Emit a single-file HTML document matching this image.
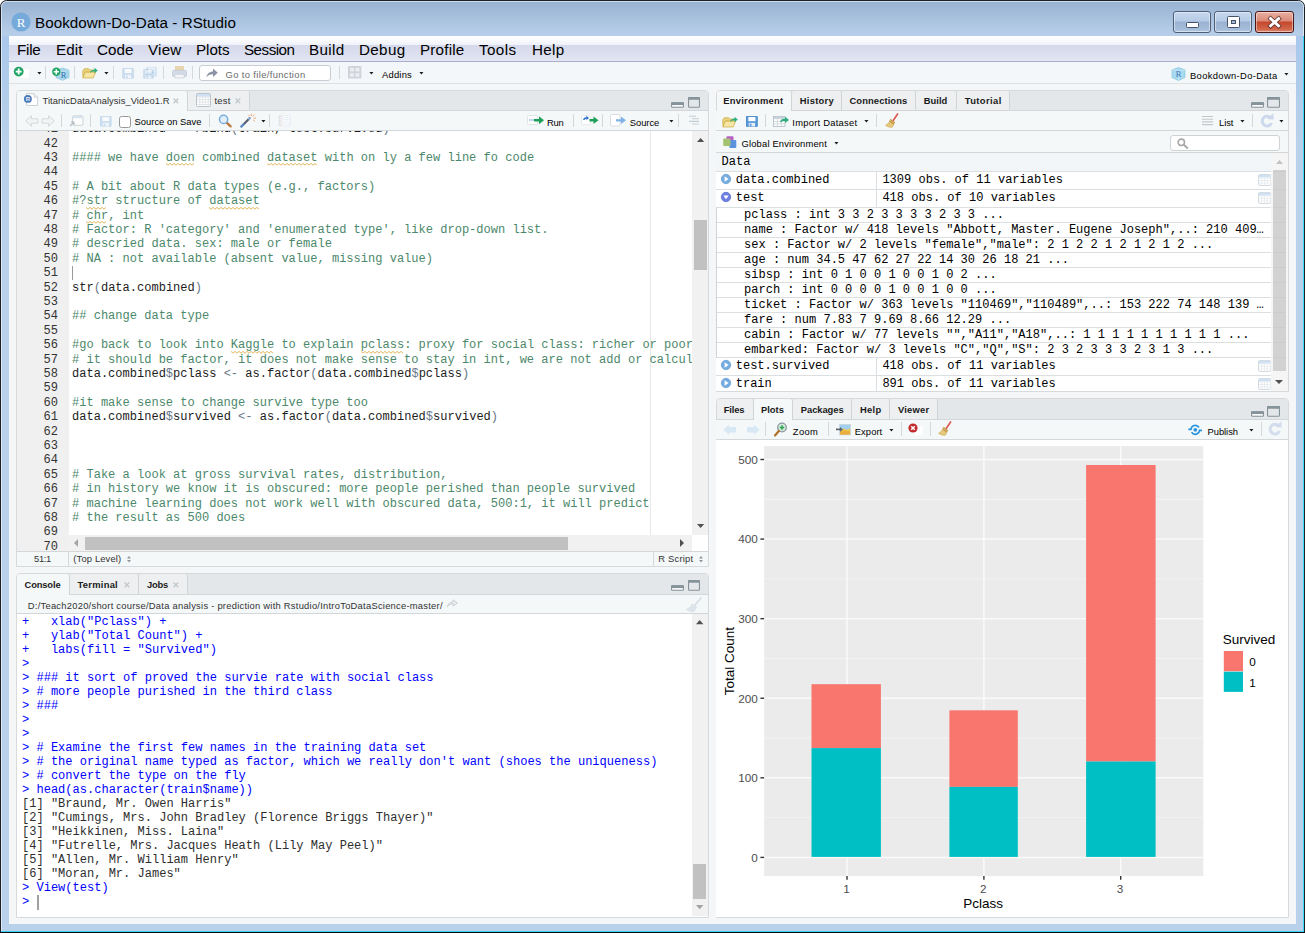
<!DOCTYPE html>
<html><head><meta charset="utf-8"><title>Bookdown-Do-Data - RStudio</title>
<style>
html,body{margin:0;padding:0;}
body{width:1305px;height:933px;overflow:hidden;position:relative;background:#fff;font-family:"Liberation Sans",sans-serif;font-size:10.5px;color:#000;}
.t{position:absolute;white-space:pre;line-height:20px;height:20px;}
.a{position:absolute;}
.m{font-family:"Liberation Mono",monospace;}
svg{position:absolute;overflow:visible;}
.pane{position:absolute;box-sizing:border-box;border:1px solid #d6dadc;background:#fff;border-radius:4px 4px 0 0;overflow:hidden;}
.tabbar{position:absolute;left:0;top:0;right:0;height:20px;background:#e4e7e9;border-bottom:1px solid #d6dadc;}
.tab{position:absolute;top:0;height:20px;box-sizing:border-box;border-right:1px solid #d0d4d6;background:#eef0f1;border-radius:3px 3px 0 0;}
.tab.on{background:#f5f8f9;height:21px;}
.tb{position:absolute;left:0;right:0;background:#f5f8f9;border-bottom:1px solid #d6dadc;}
.sep{position:absolute;width:1px;background:#d4d8da;}
.cl{position:absolute;left:72px;white-space:pre;font-family:"Liberation Mono",monospace;font-size:12.04px;line-height:15px;height:15px;color:#1c1c1c;}
.ln{position:absolute;left:17px;width:41px;text-align:right;white-space:pre;font-family:"Liberation Mono",monospace;font-size:12.04px;line-height:15px;height:15px;color:#333;}
.c{color:#4c886b;}
.o{color:#687687;}
.sp{}
.co{position:absolute;left:22px;white-space:pre;font-family:"Liberation Mono",monospace;font-size:12.04px;line-height:14px;height:14px;color:#0000ff;}
.co.k{color:#2e2e2e;}

</style></head>
<body>
<div class="a" style="left:0;top:0;width:1305px;height:933px;box-sizing:border-box;border:1px solid #1b2026;border-radius:6.5px 6.5px 0 0;background:linear-gradient(#97b1d1 0px,#a3bcda 12px,#b4cce7 30px,#b9d1ea 40px,#b9d1ea 100%);"></div>
<div class="a" style="left:1px;top:1px;width:1303px;height:931px;box-sizing:border-box;border:1px solid rgba(255,255,255,0.55);border-radius:5.5px 5.5px 0 0;"></div>
<div style="position:absolute;left:2px;top:36px;width:7px;height:888px;background:linear-gradient(#a9c8ec,#b9d1ea 12%,#b9d1ea);"></div>
<div style="position:absolute;left:1296px;top:36px;width:7px;height:888px;background:linear-gradient(#a9c8ec,#b9d1ea 12%,#b9d1ea);"></div>
<div style="position:absolute;left:1px;top:931px;width:1303px;height:1px;background:#34d4f5;"></div>
<div style="position:absolute;left:1303px;top:36px;width:1px;height:896px;background:#3ad9f8;"></div>
<div style="position:absolute;left:0px;top:932px;width:1305px;height:1px;background:#0c0c0c;"></div>
<svg style="left:11px;top:12px" width="20" height="20" viewBox="0 0 20 20"><circle cx="10" cy="10" r="9.6" fill="#75aadb"/><text x="10" y="14.6" text-anchor="middle" font-family="Liberation Serif" font-size="13" fill="#fff">R</text></svg>
<div class="t" style="left:35px;top:12.93px;font-size:15.2px;color:#000;letter-spacing:0.035px;">Bookdown-Do-Data - RStudio</div>
<div class="a" style="left:1173px;top:11px;width:38px;height:22px;box-sizing:border-box;border:1px solid #4f5f77;border-radius:3px;background:linear-gradient(#c6d8ee 0%,#b6cbe5 45%,#9bb3d2 50%,#a4bcd9 85%,#b4cae4 100%);box-shadow:inset 0 0 0 1px rgba(255,255,255,0.45);"></div>
<div class="a" style="left:1214px;top:11px;width:38px;height:22px;box-sizing:border-box;border:1px solid #4f5f77;border-radius:3px;background:linear-gradient(#c6d8ee 0%,#b6cbe5 45%,#9bb3d2 50%,#a4bcd9 85%,#b4cae4 100%);box-shadow:inset 0 0 0 1px rgba(255,255,255,0.45);"></div>
<div class="a" style="left:1255px;top:11px;width:39px;height:22px;box-sizing:border-box;border:1px solid #4b1715;border-radius:3px;background:linear-gradient(#e8b0a3 0%,#dc8a78 45%,#c4472b 50%,#d0654a 85%,#e08a70 100%);box-shadow:inset 0 0 0 1px rgba(255,255,255,0.45);"></div>
<svg style="left:1186px;top:21.7px" width="13" height="7" viewBox="0 0 13 7"><rect x="0.5" y="0.5" width="12" height="5" rx="1" fill="#fff" stroke="#45536a"/></svg>
<svg style="left:1227px;top:16px" width="13" height="12" viewBox="0 0 13 12"><rect x="0.5" y="0.5" width="12" height="11" rx="1" fill="#fff" stroke="#45536a"/><rect x="4.5" y="4.5" width="4" height="3" fill="#a3b9d6" stroke="#45536a"/></svg>
<svg style="left:1268px;top:16px" width="13" height="12" viewBox="0 0 13 12"><path d="M2.6 2.6L10.6 9.8M10.6 2.6L2.6 9.8" stroke="#5a2a26" stroke-width="4.4" stroke-linecap="square"/><path d="M2.6 2.6L10.6 9.8M10.6 2.6L2.6 9.8" stroke="#fff" stroke-width="2.9" stroke-linecap="square"/></svg>
<div style="position:absolute;left:9px;top:36px;width:1287px;height:888px;background:#f5f6f8;"></div>
<div style="position:absolute;left:9px;top:36px;width:1287px;height:25px;background:linear-gradient(#ffffff 0px,#fbfcfe 3px,#eff2f9 8.6px,#d5d9eb 9.4px,#dadeee 17px,#e2e5f3 25px);"></div>
<div style="position:absolute;left:9px;top:61px;width:1287px;height:1px;background:#a9b0c9;"></div>
<div class="t" style="left:17px;top:40.23px;font-size:15.2px;color:#000;letter-spacing:-0.246px;">File</div>
<div class="t" style="left:56px;top:40.23px;font-size:15.2px;color:#000;letter-spacing:0.082px;">Edit</div>
<div class="t" style="left:97px;top:40.23px;font-size:15.2px;color:#000;letter-spacing:0.047px;">Code</div>
<div class="t" style="left:148px;top:40.23px;font-size:15.2px;color:#000;letter-spacing:0.211px;">View</div>
<div class="t" style="left:196px;top:40.23px;font-size:15.2px;color:#000;letter-spacing:-0.053px;">Plots</div>
<div class="t" style="left:244px;top:40.23px;font-size:15.2px;color:#000;letter-spacing:-0.507px;">Session</div>
<div class="t" style="left:309px;top:40.23px;font-size:15.2px;color:#000;letter-spacing:0.344px;">Build</div>
<div class="t" style="left:359px;top:40.23px;font-size:15.2px;color:#000;letter-spacing:0.347px;">Debug</div>
<div class="t" style="left:420px;top:40.23px;font-size:15.2px;color:#000;letter-spacing:0.205px;">Profile</div>
<div class="t" style="left:479px;top:40.23px;font-size:15.2px;color:#000;letter-spacing:0.406px;">Tools</div>
<div class="t" style="left:532px;top:40.23px;font-size:15.2px;color:#000;letter-spacing:0.312px;">Help</div>
<div style="position:absolute;left:9px;top:62px;width:1287px;height:21px;background:#f4f7f9;"></div>
<div style="position:absolute;left:9px;top:83px;width:1287px;height:1px;background:#dde1e4;"></div>
<svg style="left:13px;top:65px" width="18" height="15" viewBox="0 0 18 15"><rect x="6.6" y="3.6" width="10" height="10" fill="#fff" stroke="#eceff1" stroke-width="0.5"/><circle cx="5.7" cy="6.6" r="4.9" fill="#1fa463"/><path d="M5.7 3.6V9.6M2.7 6.6H8.7" stroke="#fff" stroke-width="1.8"/></svg>
<svg style="left:36.6px;top:72.2px" width="5" height="3" viewBox="0 0 5 3"><path d="M0.35 0H4.45L2.4 2.55Z" fill="#1d1d1d"/></svg>
<div class="sep" style="left:45px;top:66px;height:13px"></div>
<svg style="left:52px;top:66px" width="18" height="15" viewBox="0 0 18 15"><path d="M4 4.2L10.5 2L17 4.2V11.6L10.5 14.3L4 11.6Z" fill="#a9d6ea" stroke="#86c4df" stroke-width="0.7"/><path d="M10.5 5.8V14.3M4 4.2L10.5 5.8L17 4.2" stroke="#c9e6f2" stroke-width="0.6" fill="none"/><text x="11.6" y="12.2" text-anchor="middle" font-family="Liberation Serif" font-size="8.5" fill="#2f6db5">R</text><circle cx="4.3" cy="5.8" r="4.2" fill="#1fa463"/><path d="M4.3 3.2V8.4M1.7 5.8H6.9" stroke="#fff" stroke-width="1.6"/></svg>
<div class="sep" style="left:74px;top:66px;height:13px"></div>
<svg style="left:81.2px;top:67.2px" width="17.6" height="11.8" viewBox="0 0 19 14"><path d="M1 5L3 2H8L9.5 3.5H14V6H4L1.5 12.5Z" fill="#e9d27c" stroke="#cfae45" stroke-width="0.9"/><path d="M4 6.2H16.5L13.5 13H1.3Z" fill="#f5e6a6" stroke="#cfae45" stroke-width="0.9"/><path d="M9.5 7.5C10 4.5 12 3 15 3.2V1L19 4.2L15 7.4V5.2C12.8 5 11 5.8 9.5 7.5Z" fill="#2cae7c"/></svg>
<svg style="left:103.6px;top:72.2px" width="5" height="3" viewBox="0 0 5 3"><path d="M0.35 0H4.45L2.4 2.55Z" fill="#1d1d1d"/></svg>
<div class="sep" style="left:113px;top:66px;height:13px"></div>
<svg style="left:121.6px;top:68px" width="12.2" height="10.6" viewBox="0 0 12 11"><g opacity="0.27"><path d="M0.5 0.5H11.5V10.5H0.5Z" fill="#5b9bd8" stroke="#4f8fd0"/><rect x="2.4" y="1" width="7.2" height="4.2" fill="#fff"/><rect x="2.8" y="7" width="6.4" height="3.6" fill="#e6eff8"/><rect x="3.8" y="7.8" width="1.8" height="2.8" fill="#5b9bd8"/></g></svg>
<svg style="left:146px;top:66.6px" width="11" height="9.6" viewBox="0 0 12 11"><g opacity="0.2"><path d="M0.5 0.5H11.5V10.5H0.5Z" fill="#5b9bd8" stroke="#4f8fd0"/><rect x="2.4" y="1" width="7.2" height="4.2" fill="#fff"/><rect x="2.8" y="7" width="6.4" height="3.6" fill="#e6eff8"/><rect x="3.8" y="7.8" width="1.8" height="2.8" fill="#5b9bd8"/></g></svg>
<svg style="left:143px;top:69px" width="11" height="9.6" viewBox="0 0 12 11"><g opacity="0.27"><path d="M0.5 0.5H11.5V10.5H0.5Z" fill="#5b9bd8" stroke="#4f8fd0"/><rect x="2.4" y="1" width="7.2" height="4.2" fill="#fff"/><rect x="2.8" y="7" width="6.4" height="3.6" fill="#e6eff8"/><rect x="3.8" y="7.8" width="1.8" height="2.8" fill="#5b9bd8"/></g></svg>
<div class="sep" style="left:163px;top:66px;height:13px"></div>
<svg style="left:171.5px;top:66px" width="15" height="13" viewBox="0 0 15 13"><rect x="3.4" y="0.4" width="8.2" height="5" fill="#ead6ae" stroke="#dcc79c" stroke-width="0.5"/><rect x="0.5" y="4.3" width="14" height="6.4" rx="1.6" fill="#d3dbe6" stroke="#bcc6d3" stroke-width="0.7"/><rect x="2.8" y="8.3" width="9.4" height="3.6" rx="0.5" fill="#f3f5f8" stroke="#bcc6d3" stroke-width="0.6"/></svg>
<div class="sep" style="left:192px;top:66px;height:13px"></div>
<div class="a" style="left:199px;top:65px;width:132px;height:16px;box-sizing:border-box;border:1px solid #c9cdd1;border-radius:3px;background:#fff;"></div>
<svg style="left:206px;top:68px" width="12" height="10" viewBox="0 0 12 10"><path d="M0.5 9.5C1 5.5 3.5 3.6 7 3.5V0.5L11.8 4.8L7 9V6.2C4.2 6 2.2 7 0.5 9.5Z" fill="#8d93a6"/></svg>
<div class="t" style="left:225.5px;top:65.24px;font-size:9.4px;color:#6a6a6a;letter-spacing:0.370px;">Go to file/function</div>
<div class="sep" style="left:339px;top:66px;height:13px"></div>
<svg style="left:348px;top:66.2px" width="13.4" height="12.6" viewBox="0 0 13.4 12.6"><rect x="0" y="0" width="13.4" height="12.6" rx="1.2" fill="#cfd4da"/><g fill="#eceef2"><rect x="2" y="1.9" width="3.9" height="3.5"/><rect x="7.5" y="1.9" width="3.9" height="3.5"/><rect x="2" y="7.2" width="3.9" height="3.5"/><rect x="7.5" y="7.2" width="3.9" height="3.5"/></g></svg>
<svg style="left:368.6px;top:72.2px" width="5" height="3" viewBox="0 0 5 3"><path d="M0.35 0H4.45L2.4 2.55Z" fill="#1d1d1d"/></svg>
<div class="t" style="left:382px;top:65.24px;font-size:9.4px;color:#000;letter-spacing:0.221px;">Addins</div>
<svg style="left:418.6px;top:72.2px" width="5" height="3" viewBox="0 0 5 3"><path d="M0.35 0H4.45L2.4 2.55Z" fill="#1d1d1d"/></svg>
<svg style="left:1171px;top:66px" width="15" height="15" viewBox="0 0 15 15"><path d="M1 4L7.5 1.5L14 4V11.5L7.5 14.5L1 11.5Z" fill="#a9daef" stroke="#7fc5e3" stroke-width="0.7"/><path d="M7.5 4.4V14.5M1 4L7.5 4.4L14 4" stroke="#cdeaf5" stroke-width="0.6" fill="none"/><text x="7.6" y="11" text-anchor="middle" font-family="Liberation Serif" font-size="8.5" fill="#3f78b5">R</text></svg>
<div class="t" style="left:1190px;top:66.04px;font-size:9.4px;color:#000;letter-spacing:0.355px;">Bookdown-Do-Data</div>
<svg style="left:1283.6px;top:73.2px" width="5" height="3" viewBox="0 0 5 3"><path d="M0.35 0H4.45L2.4 2.55Z" fill="#1d1d1d"/></svg>
<div class="pane" style="left:16px;top:90px;width:693px;height:477px"></div>
<div style="position:absolute;left:17px;top:91px;width:691px;height:19px;background:#e4e7e9;border-radius:3px 3px 0 0;"></div>
<div style="position:absolute;left:17px;top:110px;width:691px;height:1px;background:#d3d7da;"></div>
<div style="position:absolute;left:17px;top:91px;width:170px;height:20px;background:#f5f8f9;border-radius:3px 3px 0 0;border-right:1px solid #cfd4d7;"></div>
<div style="position:absolute;left:188px;top:91px;width:61px;height:19px;background:#edeff0;border-radius:3px 3px 0 0;border-right:1px solid #cfd4d7;"></div>
<svg style="left:23px;top:93px" width="16" height="14" viewBox="0 0 16 14"><path d="M3.5 0.6H11L14.6 4.2V12.5H3.5Z" fill="#fff" stroke="#c2c7cc" stroke-width="0.8"/><path d="M11 0.6V4.2H14.6" fill="#eef1f3" stroke="#c2c7cc" stroke-width="0.7"/><circle cx="4.9" cy="5.9" r="3.95" fill="#4b7cba"/><text x="4.9" y="8.1" text-anchor="middle" font-family="Liberation Sans" font-weight="bold" font-size="6" fill="#e8eef6">R</text></svg>
<div class="t" style="left:42.5px;top:91.04px;font-size:9.4px;color:#303030;letter-spacing:0.050px;">TitanicDataAnalysis_Video1.R</div>
<svg style="left:173.4px;top:97.5px" width="6" height="6" viewBox="0 0 6 6"><path d="M0.6 0.6L5.2 5.2M5.2 0.6L0.6 5.2" stroke="#c3c8cc" stroke-width="1.35"/></svg>
<svg style="left:196px;top:93px" width="15" height="14" viewBox="0 0 15 14"><rect x="0.5" y="0.5" width="14" height="13" rx="1" fill="#fff" stroke="#b5bcc4" stroke-width="0.9"/><rect x="1" y="1" width="13" height="2.6" fill="#cfe2f3"/><path d="M1 4H14M1 6.5H14M1 9H14M1 11.5H14M3.8 4V13M6.6 4V13M9.4 4V13M12.2 4V13" stroke="#d3d8de" stroke-width="0.6"/></svg>
<div class="t" style="left:214.5px;top:91.04px;font-size:9.4px;color:#303030;letter-spacing:0.219px;">test</div>
<svg style="left:234.9px;top:97.5px" width="6" height="6" viewBox="0 0 6 6"><path d="M0.6 0.6L5.2 5.2M5.2 0.6L0.6 5.2" stroke="#c3c8cc" stroke-width="1.35"/></svg>
<svg style="left:671px;top:97.1px" width="32" height="12" viewBox="0 0 32 12"><rect x="0.55" y="5.85" width="11.9" height="4.4" rx="0.8" fill="#f7f8f9" stroke="#87939b" stroke-width="1.1"/><rect x="0" y="5.3" width="13" height="2.6" rx="1" fill="#87939b"/><rect x="17.55" y="0.55" width="10.9" height="9.7" rx="0.8" fill="none" stroke="#87939b" stroke-width="1.1"/><rect x="17" y="0" width="12" height="2.8" rx="1" fill="#87939b"/></svg>
<div style="position:absolute;left:17px;top:111px;width:691px;height:19px;background:#f5f8f9;"></div>
<div style="position:absolute;left:17px;top:130px;width:691px;height:1px;background:#d3d7da;"></div>
<svg style="left:25px;top:115px" width="14" height="12" viewBox="0 0 14 12"><path d="M0.8 6L6.5 0.8V3.8H13V8.2H6.5V11.2Z" fill="#f1f3f4" stroke="#d5d9dc" stroke-width="1"/></svg>
<svg style="left:41px;top:115px" width="14" height="12" viewBox="0 0 14 12"><path d="M13.2 6L7.5 0.8V3.8H1V8.2H7.5V11.2Z" fill="#f1f3f4" stroke="#d5d9dc" stroke-width="1"/></svg>
<div class="sep" style="left:61px;top:113.5px;height:13.8px"></div>
<svg style="left:69px;top:115px" width="15" height="12" viewBox="0 0 15 12"><rect x="3.5" y="0.8" width="10.5" height="9.5" rx="1.5" fill="#fdfdfd" stroke="#cdd2d6"/><rect x="4" y="1" width="9.5" height="2.2" fill="#d6e4f2"/><path d="M1 11L5 7M5 7H2.2M5 7V9.8" stroke="#b9c0c7" stroke-width="1.3" fill="none"/></svg>
<div class="sep" style="left:90px;top:113.5px;height:13.8px"></div>
<svg style="left:99.8px;top:116.2px" width="11.6" height="10.8" viewBox="0 0 12 11"><g opacity="0.27"><path d="M0.5 0.5H11.5V10.5H0.5Z" fill="#5b9bd8" stroke="#4f8fd0"/><rect x="2.4" y="1" width="7.2" height="4.2" fill="#fff"/><rect x="2.8" y="7" width="6.4" height="3.6" fill="#e6eff8"/><rect x="3.8" y="7.8" width="1.8" height="2.8" fill="#5b9bd8"/></g></svg>
<div class="a" style="left:119px;top:116px;width:12px;height:12px;box-sizing:border-box;border:1px solid #9a9a9a;border-radius:2.5px;background:#fff"></div>
<div class="t" style="left:134.5px;top:112.04px;font-size:9.4px;color:#000;letter-spacing:0.020px;">Source on Save</div>
<div class="sep" style="left:209px;top:113.5px;height:13.8px"></div>
<svg style="left:217.8px;top:113.8px" width="14" height="14" viewBox="0 0 14 14"><path d="M8.4 8.4L12.6 12.4" stroke="#b87a3e" stroke-width="2.3" stroke-linecap="round"/><circle cx="5.6" cy="5.4" r="4.1" fill="#e3effa" stroke="#78abdc" stroke-width="1.5"/></svg>
<svg style="left:240px;top:113px" width="17" height="15" viewBox="0 0 17 15"><path d="M1.4 13.4L9.6 5.2" stroke="#555d6b" stroke-width="2.1" stroke-linecap="round"/><path d="M1.4 13.4L3.4 11.4" stroke="#5b8fd0" stroke-width="2.1" stroke-linecap="round"/><path d="M8.4 6.4L9.8 5" stroke="#8fb4e0" stroke-width="2.3"/><path d="M11.3 0.6V3M14.6 1.6L12.9 3.4M16 5.1H13.6M14.8 8.4L13.1 6.8M8.4 1.8L9.9 3.3" stroke="#f2a172" stroke-width="1"/></svg>
<svg style="left:260.8px;top:120.3px" width="5" height="3" viewBox="0 0 5 3"><path d="M0.35 0H4.45L2.4 2.55Z" fill="#1d1d1d"/></svg>
<div class="sep" style="left:269px;top:113.5px;height:13.8px"></div>
<svg style="left:278px;top:115px" width="14" height="12" viewBox="0 0 14 12"><rect x="1.2" y="0.4" width="11.3" height="10.6" rx="0.8" fill="#fdfeff" stroke="#e6e9ed" stroke-width="0.8"/><path d="M3.6 2.6H12M3.6 4.7H12M3.6 6.8H12M3.6 8.9H12" stroke="#e4ebf6" stroke-width="0.9"/><path d="M0.8 1.6H3.2M0.8 3.7H3.2M0.8 5.8H3.2M0.8 7.9H3.2M0.8 10H3.2" stroke="#d3d8de" stroke-width="1"/><path d="M3.9 0.8V10.6" stroke="#f6dede" stroke-width="0.6"/></svg>
<svg style="left:527px;top:115px" width="18" height="11" viewBox="0 0 18 11"><rect x="0.5" y="0.5" width="10" height="9" rx="1" fill="#fff" stroke="#d9dde0" stroke-width="0.8"/><path d="M2 5H7" stroke="#a9cdea" stroke-width="1.6"/><path d="M7 4H12V1.2L17 5.2L12 9.2V6.4H7Z" fill="#1fa05a"/></svg>
<div class="t" style="left:547px;top:113.04px;font-size:9.4px;color:#000;letter-spacing:-0.234px;">Run</div>
<div class="sep" style="left:573px;top:113.5px;height:13.8px"></div>
<svg style="left:581px;top:115px" width="18" height="11" viewBox="0 0 18 11"><rect x="0.5" y="0.5" width="9" height="9" rx="1" fill="#fff" stroke="#e1e4e6" stroke-width="0.8"/><path d="M2.2 5C2.2 3 3.5 2 5.4 2.2V0.8L8 3L5.4 5.2V3.8C4.4 3.7 3.8 4.1 3.6 5Z" fill="#2f6fd0"/><path d="M8.5 4H12.5V1.4L17.5 5.2L12.5 9V6.4H8.5Z" fill="#1fa05a"/></svg>
<div class="sep" style="left:602px;top:113.5px;height:13.8px"></div>
<svg style="left:610px;top:114px" width="17" height="13" viewBox="0 0 17 13"><rect x="0.5" y="0.5" width="9.5" height="11.5" rx="1" fill="#fff" stroke="#d5d9dc" stroke-width="0.9"/><path d="M6 5.2H11V2.6L16 6.3L11 10V7.4H6Z" fill="#7fb2e5"/></svg>
<div class="t" style="left:629.8px;top:113.04px;font-size:9.4px;color:#000;letter-spacing:-0.036px;">Source</div>
<svg style="left:668.9px;top:120.4px" width="5" height="3" viewBox="0 0 5 3"><path d="M0.35 0H4.45L2.4 2.55Z" fill="#1d1d1d"/></svg>
<div class="sep" style="left:678px;top:113.5px;height:13.8px"></div>
<svg style="left:688px;top:115px" width="12" height="11" viewBox="0 0 12 11"><path d="M1 1.2H8M4 3.8H11M1 6.4H11M4 9H11" stroke="#c3cbd3" stroke-width="1.1"/></svg>
<div class="a" style="left:17px;top:131px;width:691px;height:420px;overflow:hidden;background:#fff" id="ed">
<div style="position:absolute;left:0px;top:0px;width:52px;height:420px;background:#f0f0f0;"></div>
<div style="position:absolute;left:633px;top:0px;width:1px;height:404px;background:#e8e8e8;"></div>
<div class="ln" style="left:0;top:-8.90px">41</div>
<div class="cl" style="left:55px;top:-8.90px">data.combined <span class="o">&lt;-</span> rbind<span class="o">(</span>train, test.survived<span class="o">)</span></div>
<div class="ln" style="left:0;top:5.50px">42</div>
<div class="ln" style="left:0;top:19.90px">43</div>
<div class="cl" style="left:55px;top:19.90px"><span class="c">#### we have <span class="sp">doen</span> combined <span class="sp">dataset</span> with on ly a few line fo code</span></div>
<svg style="left:148.93px;top:32.40px" width="28.9" height="3"><polyline points="0.0,0.4 2.0,2.2 4.0,0.4 6.0,2.2 8.0,0.4 10.0,2.2 12.0,0.4 14.0,2.2 16.0,0.4 18.0,2.2 20.0,0.4 22.0,2.2 24.0,0.4 26.0,2.2 28.0,0.4" fill="none" stroke="#dcaf4c" stroke-width="0.9"/></svg>
<svg style="left:250.07px;top:32.40px" width="50.6" height="3"><polyline points="0.0,0.4 2.0,2.2 4.0,0.4 6.0,2.2 8.0,0.4 10.0,2.2 12.0,0.4 14.0,2.2 16.0,0.4 18.0,2.2 20.0,0.4 22.0,2.2 24.0,0.4 26.0,2.2 28.0,0.4 30.0,2.2 32.0,0.4 34.0,2.2 36.0,0.4 38.0,2.2 40.0,0.4 42.0,2.2 44.0,0.4 46.0,2.2 48.0,0.4 50.0,2.2" fill="none" stroke="#dcaf4c" stroke-width="0.9"/></svg>
<div class="ln" style="left:0;top:34.30px">44</div>
<div class="ln" style="left:0;top:48.70px">45</div>
<div class="cl" style="left:55px;top:48.70px"><span class="c"># A bit about R data types (e.g., factors)</span></div>
<div class="ln" style="left:0;top:63.10px">46</div>
<div class="cl" style="left:55px;top:63.10px"><span class="c">#?<span class="sp">str</span> structure of <span class="sp">dataset</span></span></div>
<svg style="left:69.45px;top:75.60px" width="21.7" height="3"><polyline points="0.0,0.4 2.0,2.2 4.0,0.4 6.0,2.2 8.0,0.4 10.0,2.2 12.0,0.4 14.0,2.2 16.0,0.4 18.0,2.2 20.0,0.4" fill="none" stroke="#dcaf4c" stroke-width="0.9"/></svg>
<svg style="left:192.28px;top:75.60px" width="50.6" height="3"><polyline points="0.0,0.4 2.0,2.2 4.0,0.4 6.0,2.2 8.0,0.4 10.0,2.2 12.0,0.4 14.0,2.2 16.0,0.4 18.0,2.2 20.0,0.4 22.0,2.2 24.0,0.4 26.0,2.2 28.0,0.4 30.0,2.2 32.0,0.4 34.0,2.2 36.0,0.4 38.0,2.2 40.0,0.4 42.0,2.2 44.0,0.4 46.0,2.2 48.0,0.4 50.0,2.2" fill="none" stroke="#dcaf4c" stroke-width="0.9"/></svg>
<div class="ln" style="left:0;top:77.50px">47</div>
<div class="cl" style="left:55px;top:77.50px"><span class="c"># <span class="sp">chr</span>, int</span></div>
<svg style="left:69.45px;top:90.00px" width="21.7" height="3"><polyline points="0.0,0.4 2.0,2.2 4.0,0.4 6.0,2.2 8.0,0.4 10.0,2.2 12.0,0.4 14.0,2.2 16.0,0.4 18.0,2.2 20.0,0.4" fill="none" stroke="#dcaf4c" stroke-width="0.9"/></svg>
<div class="ln" style="left:0;top:91.90px">48</div>
<div class="cl" style="left:55px;top:91.90px"><span class="c"># Factor: R 'category' and 'enumerated type', like drop-down list.</span></div>
<div class="ln" style="left:0;top:106.30px">49</div>
<div class="cl" style="left:55px;top:106.30px"><span class="c"># descried data. sex: male or female</span></div>
<div class="ln" style="left:0;top:120.70px">50</div>
<div class="cl" style="left:55px;top:120.70px"><span class="c"># NA : not available (absent value, missing value)</span></div>
<div class="ln" style="left:0;top:135.10px">51</div>
<div class="ln" style="left:0;top:149.50px">52</div>
<div class="cl" style="left:55px;top:149.50px">str<span class="o">(</span>data.combined<span class="o">)</span></div>
<div class="ln" style="left:0;top:163.90px">53</div>
<div class="ln" style="left:0;top:178.30px">54</div>
<div class="cl" style="left:55px;top:178.30px"><span class="c">## change data type</span></div>
<div class="ln" style="left:0;top:192.70px">55</div>
<div class="ln" style="left:0;top:207.10px">56</div>
<div class="cl" style="left:55px;top:207.10px"><span class="c">#go back to look into <span class="sp">Kaggle</span> to explain <span class="sp">pclass</span>: proxy for social class: richer or poor</span></div>
<svg style="left:213.95px;top:219.60px" width="43.3" height="3"><polyline points="0.0,0.4 2.0,2.2 4.0,0.4 6.0,2.2 8.0,0.4 10.0,2.2 12.0,0.4 14.0,2.2 16.0,0.4 18.0,2.2 20.0,0.4 22.0,2.2 24.0,0.4 26.0,2.2 28.0,0.4 30.0,2.2 32.0,0.4 34.0,2.2 36.0,0.4 38.0,2.2 40.0,0.4 42.0,2.2" fill="none" stroke="#dcaf4c" stroke-width="0.9"/></svg>
<svg style="left:344.00px;top:219.60px" width="43.3" height="3"><polyline points="0.0,0.4 2.0,2.2 4.0,0.4 6.0,2.2 8.0,0.4 10.0,2.2 12.0,0.4 14.0,2.2 16.0,0.4 18.0,2.2 20.0,0.4 22.0,2.2 24.0,0.4 26.0,2.2 28.0,0.4 30.0,2.2 32.0,0.4 34.0,2.2 36.0,0.4 38.0,2.2 40.0,0.4 42.0,2.2" fill="none" stroke="#dcaf4c" stroke-width="0.9"/></svg>
<div class="ln" style="left:0;top:221.50px">57</div>
<div class="cl" style="left:55px;top:221.50px"><span class="c"># it should be factor, it does not make sense to stay in int, we are not add or calcul</span></div>
<div class="ln" style="left:0;top:235.90px">58</div>
<div class="cl" style="left:55px;top:235.90px">data.combined<span class="o">$</span>pclass <span class="o">&lt;-</span> as.factor<span class="o">(</span>data.combined<span class="o">$</span>pclass<span class="o">)</span></div>
<div class="ln" style="left:0;top:250.30px">59</div>
<div class="ln" style="left:0;top:264.70px">60</div>
<div class="cl" style="left:55px;top:264.70px"><span class="c">#it make sense to change survive type too</span></div>
<div class="ln" style="left:0;top:279.10px">61</div>
<div class="cl" style="left:55px;top:279.10px">data.combined<span class="o">$</span>survived <span class="o">&lt;-</span> as.factor<span class="o">(</span>data.combined<span class="o">$</span>survived<span class="o">)</span></div>
<div class="ln" style="left:0;top:293.50px">62</div>
<div class="ln" style="left:0;top:307.90px">63</div>
<div class="ln" style="left:0;top:322.30px">64</div>
<div class="ln" style="left:0;top:336.70px">65</div>
<div class="cl" style="left:55px;top:336.70px"><span class="c"># Take a look at gross survival rates, distribution,</span></div>
<div class="ln" style="left:0;top:351.10px">66</div>
<div class="cl" style="left:55px;top:351.10px"><span class="c"># in history we know it is obscured: more people perished than people survived</span></div>
<div class="ln" style="left:0;top:365.50px">67</div>
<div class="cl" style="left:55px;top:365.50px"><span class="c"># machine learning does not work well with obscured data, 500:1, it will predict</span></div>
<div class="ln" style="left:0;top:379.90px">68</div>
<div class="cl" style="left:55px;top:379.90px"><span class="c"># the result as 500 does</span></div>
<div class="ln" style="left:0;top:394.30px">69</div>
<div class="ln" style="left:0;top:408.70px">70</div>
<div style="position:absolute;left:55px;top:134.5px;width:1px;height:14px;background:#9a9a9a;"></div>
<div style="position:absolute;left:675px;top:0px;width:16px;height:404px;background:#f1f1f1;"></div>
<svg style="left:680px;top:7px" width="7.2" height="4.1" viewBox="0 0 7.2 4.1"><path d="M0 4.1L3.6 0L7.2 4.1Z" fill="#505050"/></svg>
<div style="position:absolute;left:677px;top:89px;width:13px;height:50px;background:#c1c1c1;"></div>
<svg style="left:680px;top:393px" width="7.2" height="4.1" viewBox="0 0 7.2 4.1"><path d="M0 0L3.6 4.1L7.2 0Z" fill="#505050"/></svg>
<div style="position:absolute;left:52px;top:404px;width:623px;height:16px;background:#f1f1f1;"></div>
<svg style="left:57px;top:408px" width="4" height="8" viewBox="0 0 4 8"><path d="M4 0L0 4L4 8Z" fill="#a3a3a3"/></svg>
<div style="position:absolute;left:68px;top:406.20000000000005px;width:482.5px;height:12.5px;background:#c1c1c1;"></div>
<svg style="left:663px;top:408px" width="4" height="8" viewBox="0 0 4 8"><path d="M0 0L4 4L0 8Z" fill="#505050"/></svg>
</div>
<div style="position:absolute;left:17px;top:551px;width:691px;height:1px;background:#d3d7da;"></div>
<div style="position:absolute;left:17px;top:552px;width:691px;height:14px;background:#f5f8f9;"></div>
<div class="t" style="left:34px;top:548.54px;font-size:9.4px;color:#333;letter-spacing:-0.312px;">51:1</div>
<div class="sep" style="left:68px;top:552px;height:14px"></div>
<div class="t" style="left:73.3px;top:548.54px;font-size:9.4px;color:#333;letter-spacing:0.148px;">(Top Level)</div>
<svg style="left:126.8px;top:556.4px" width="4" height="6.4" viewBox="0 0 4 6.4"><path d="M0 2.4L2 0L4 2.4ZM0 4L2 6.4L4 4Z" fill="#90969c"/></svg>
<div class="sep" style="left:653px;top:552px;height:14px"></div>
<div class="t" style="left:658.3px;top:548.54px;font-size:9.4px;color:#333;letter-spacing:0.207px;">R Script</div>
<svg style="left:699.2px;top:556.4px" width="4" height="6.4" viewBox="0 0 4 6.4"><path d="M0 2.4L2 0L4 2.4ZM0 4L2 6.4L4 4Z" fill="#90969c"/></svg>
<div class="pane" style="left:16px;top:573px;width:693px;height:345px"></div>
<div style="position:absolute;left:17px;top:574px;width:691px;height:20px;background:#e4e7e9;border-radius:3px 3px 0 0;"></div>
<div style="position:absolute;left:17px;top:594px;width:691px;height:1px;background:#d3d7da;"></div>
<div style="position:absolute;left:17px;top:574px;width:52px;height:21px;background:#f5f8f9;border-radius:3px 3px 0 0;border-right:1px solid #cfd4d7;"></div>
<div style="position:absolute;left:70px;top:574px;width:68px;height:20px;background:#edeff0;border-radius:3px 3px 0 0;border-right:1px solid #cfd4d7;"></div>
<div style="position:absolute;left:139px;top:574px;width:48px;height:20px;background:#edeff0;border-radius:3px 3px 0 0;border-right:1px solid #cfd4d7;"></div>
<div class="t" style="left:24.5px;top:575.04px;font-size:9.4px;font-weight:bold;color:#1a1a1a;letter-spacing:-0.141px;">Console</div>
<div class="t" style="left:77.5px;top:575.04px;font-size:9.4px;font-weight:bold;color:#1a1a1a;letter-spacing:0.264px;">Terminal</div>
<svg style="left:124.4px;top:581.5px" width="6" height="6" viewBox="0 0 6 6"><path d="M0.6 0.6L5.2 5.2M5.2 0.6L0.6 5.2" stroke="#c3c8cc" stroke-width="1.35"/></svg>
<div class="t" style="left:147px;top:575.04px;font-size:9.4px;font-weight:bold;color:#1a1a1a;letter-spacing:-0.223px;">Jobs</div>
<svg style="left:173.4px;top:581.5px" width="6" height="6" viewBox="0 0 6 6"><path d="M0.6 0.6L5.2 5.2M5.2 0.6L0.6 5.2" stroke="#c3c8cc" stroke-width="1.35"/></svg>
<svg style="left:671px;top:580.2px" width="32" height="12" viewBox="0 0 32 12"><rect x="0.55" y="5.85" width="11.9" height="4.4" rx="0.8" fill="#f7f8f9" stroke="#87939b" stroke-width="1.1"/><rect x="0" y="5.3" width="13" height="2.6" rx="1" fill="#87939b"/><rect x="17.55" y="0.55" width="10.9" height="9.7" rx="0.8" fill="none" stroke="#87939b" stroke-width="1.1"/><rect x="17" y="0" width="12" height="2.8" rx="1" fill="#87939b"/></svg>
<div style="position:absolute;left:17px;top:595px;width:691px;height:18px;background:#f5f8f9;"></div>
<div style="position:absolute;left:17px;top:613px;width:691px;height:1px;background:#d3d7da;"></div>
<div class="t" style="left:27.8px;top:595.74px;font-size:9.4px;color:#333;letter-spacing:0.246px;">D:/Teach2020/short course/Data analysis - prediction with Rstudio/IntroToDataScience-master/</div>
<svg style="left:447px;top:599px" width="11" height="8" viewBox="0 0 11 8"><path d="M0.5 7.5C1 4.5 3 3 6 3V0.8L10.5 4L6 7.2V5C3.8 4.9 2 5.6 0.5 7.5Z" fill="#e8eaec" stroke="#c3c8cc" stroke-width="0.8"/></svg>
<svg style="left:686px;top:597px" width="16" height="15" viewBox="0 0 16 15"><g opacity="0.3"><path d="M15 1L9 8" stroke="#8aa0b5" stroke-width="1.6" stroke-linecap="round"/><path d="M6 7L10.5 10L8 14.5C5 14.8 2.5 14 0.5 12.5C3 11.3 5 9.5 6 7Z" fill="#a9bccd" stroke="#8aa0b5" stroke-width="0.7"/></g></svg>
<div style="position:absolute;left:17px;top:614px;width:675px;height:303px;background:#fff;"></div>
<div class="co" style="top:615.10px">+   xlab("Pclass") +</div>
<div class="co" style="top:629.10px">+   ylab("Total Count") +</div>
<div class="co" style="top:643.10px">+   labs(fill = "Survived")</div>
<div class="co" style="top:657.10px">&gt;</div>
<div class="co" style="top:671.10px">&gt; ### it sort of proved the survie rate with social class</div>
<div class="co" style="top:685.10px">&gt; # more people purished in the third class</div>
<div class="co" style="top:699.10px">&gt; ###</div>
<div class="co" style="top:713.10px">&gt;</div>
<div class="co" style="top:727.10px">&gt;</div>
<div class="co" style="top:741.10px">&gt; # Examine the first few names in the training data set</div>
<div class="co" style="top:755.10px">&gt; # the original name typed as factor, which we really don't want (shoes the uniqueness)</div>
<div class="co" style="top:769.10px">&gt; # convert the type on the fly</div>
<div class="co" style="top:783.10px">&gt; head(as.character(train$name))</div>
<div class="co k" style="top:797.10px">[1] "Braund, Mr. Owen Harris"</div>
<div class="co k" style="top:811.10px">[2] "Cumings, Mrs. John Bradley (Florence Briggs Thayer)"</div>
<div class="co k" style="top:825.10px">[3] "Heikkinen, Miss. Laina"</div>
<div class="co k" style="top:839.10px">[4] "Futrelle, Mrs. Jacques Heath (Lily May Peel)"</div>
<div class="co k" style="top:853.10px">[5] "Allen, Mr. William Henry"</div>
<div class="co k" style="top:867.10px">[6] "Moran, Mr. James"</div>
<div class="co" style="top:881.10px">&gt; View(test)</div>
<div class="co" style="top:895.10px">&gt; </div>
<div style="position:absolute;left:37px;top:895px;width:1.6px;height:14.5px;background:#a0a0a0;"></div>
<div style="position:absolute;left:691.5px;top:614px;width:16.5px;height:302px;background:#f1f1f1;"></div>
<svg style="left:695.8px;top:620.3px" width="7.4" height="4.2" viewBox="0 0 7.4 4.2"><path d="M0 4.2L3.7 0L7.4 4.2Z" fill="#505050"/></svg>
<div style="position:absolute;left:693px;top:864px;width:13px;height:35px;background:#c1c1c1;"></div>
<svg style="left:695.8px;top:905px" width="7.4" height="4.2" viewBox="0 0 7.4 4.2"><path d="M0 0L3.7 4.2L7.4 0Z" fill="#a3a3a3"/></svg>
<div class="pane" style="left:716px;top:90px;width:573px;height:302px"></div>
<div style="position:absolute;left:717px;top:91px;width:571px;height:19px;background:#e4e7e9;border-radius:3px 3px 0 0;"></div>
<div style="position:absolute;left:717px;top:110px;width:571px;height:1px;background:#d3d7da;"></div>
<div style="position:absolute;left:717px;top:91px;width:74px;height:20px;background:#f5f8f9;border-radius:3px 3px 0 0;border-right:1px solid #cfd4d7;"></div>
<div class="t" style="left:723.3px;top:90.74px;font-size:9.4px;font-weight:bold;color:#1a1a1a;letter-spacing:0.244px;">Environment</div>
<div style="position:absolute;left:792px;top:91px;width:49px;height:19px;background:#edeff0;border-radius:3px 3px 0 0;border-right:1px solid #cfd4d7;"></div>
<div class="t" style="left:799.7px;top:90.74px;font-size:9.4px;font-weight:bold;color:#1a1a1a;letter-spacing:0.284px;">History</div>
<div style="position:absolute;left:842px;top:91px;width:73px;height:19px;background:#edeff0;border-radius:3px 3px 0 0;border-right:1px solid #cfd4d7;"></div>
<div class="t" style="left:849.5px;top:90.74px;font-size:9.4px;font-weight:bold;color:#1a1a1a;letter-spacing:0.093px;">Connections</div>
<div style="position:absolute;left:916px;top:91px;width:40px;height:19px;background:#edeff0;border-radius:3px 3px 0 0;border-right:1px solid #cfd4d7;"></div>
<div class="t" style="left:923.8px;top:90.74px;font-size:9.4px;font-weight:bold;color:#1a1a1a;letter-spacing:0.013px;">Build</div>
<div style="position:absolute;left:957px;top:91px;width:52px;height:19px;background:#edeff0;border-radius:3px 3px 0 0;border-right:1px solid #cfd4d7;"></div>
<div class="t" style="left:964.7px;top:90.74px;font-size:9.4px;font-weight:bold;color:#1a1a1a;letter-spacing:0.427px;">Tutorial</div>
<svg style="left:1251px;top:97.1px" width="32" height="12" viewBox="0 0 32 12"><rect x="0.55" y="5.85" width="11.9" height="4.4" rx="0.8" fill="#f7f8f9" stroke="#87939b" stroke-width="1.1"/><rect x="0" y="5.3" width="13" height="2.6" rx="1" fill="#87939b"/><rect x="16.55" y="0.55" width="11.9" height="9.7" rx="0.8" fill="none" stroke="#87939b" stroke-width="1.1"/><rect x="16" y="0" width="13" height="2.8" rx="1" fill="#87939b"/></svg>
<div style="position:absolute;left:717px;top:111px;width:571px;height:19px;background:#f5f8f9;"></div>
<div style="position:absolute;left:717px;top:130px;width:571px;height:1px;background:#d3d7da;"></div>
<svg style="left:721px;top:115.6px" width="17.6" height="11.8" viewBox="0 0 19 14"><path d="M1 5L3 2H8L9.5 3.5H14V6H4L1.5 12.5Z" fill="#e9d27c" stroke="#cfae45" stroke-width="0.9"/><path d="M4 6.2H16.5L13.5 13H1.3Z" fill="#f5e6a6" stroke="#cfae45" stroke-width="0.9"/><path d="M9.5 7.5C10 4.5 12 3 15 3.2V1L19 4.2L15 7.4V5.2C12.8 5 11 5.8 9.5 7.5Z" fill="#2cae7c"/></svg>
<svg style="left:745.6px;top:116px" width="11.8" height="10.9" viewBox="0 0 12 11"><g opacity="1.0"><path d="M0.5 0.5H11.5V10.5H0.5Z" fill="#5b9bd8" stroke="#4f8fd0"/><rect x="2.4" y="1" width="7.2" height="4.2" fill="#fff"/><rect x="2.8" y="7" width="6.4" height="3.6" fill="#e6eff8"/><rect x="3.8" y="7.8" width="1.8" height="2.8" fill="#5b9bd8"/></g></svg>
<div class="sep" style="left:765px;top:113.5px;height:13.8px"></div>
<svg style="left:773px;top:115.8px" width="16.4" height="11.4" viewBox="0 0 17 12"><rect x="0.5" y="0.5" width="12" height="10.5" fill="#fff" stroke="#aab4be" stroke-width="0.8"/><rect x="0.8" y="0.8" width="11.4" height="2.4" fill="#c9d4df"/><path d="M0.5 5.7H12.5M0.5 8.3H12.5M4.5 3V11M8.5 3V11" stroke="#c3cbd3" stroke-width="0.7"/><path d="M7 7C7.5 4.2 9.5 2.8 12.5 3V0.8L16.8 4.2L12.5 7.4V5.2C10.3 5 8.5 5.6 7 7Z" fill="#2cae7c"/></svg>
<div class="t" style="left:792.3px;top:113.04px;font-size:9.4px;color:#000;letter-spacing:0.251px;">Import Dataset</div>
<svg style="left:864.3px;top:120.2px" width="5" height="3" viewBox="0 0 5 3"><path d="M0.35 0H4.45L2.4 2.55Z" fill="#1d1d1d"/></svg>
<div class="sep" style="left:876px;top:113.5px;height:13.8px"></div>
<svg style="left:884.8px;top:112.6px" width="14" height="15" viewBox="0 0 14 15"><path d="M12.6 1L8.2 7.4" stroke="#dc5b57" stroke-width="1.7" stroke-linecap="round"/><path d="M5.6 6.2L9.8 9.2L7.4 14.2C4.8 14.6 2.2 13.8 0.6 12.2C2.8 11 4.6 9 5.6 6.2Z" fill="#e5c87c" stroke="#cfa955" stroke-width="0.6"/><path d="M5.4 6.6L9.6 9.6M4.6 8.2L9 11.2" stroke="#b8873a" stroke-width="1"/></svg>
<svg style="left:1202px;top:115px" width="11" height="11" viewBox="0 0 11 11"><path d="M0 1.5H11M0 4.2H11M0 6.9H11M0 9.6H11" stroke="#c4c8cc" stroke-width="1.1"/></svg>
<div class="t" style="left:1219px;top:113.04px;font-size:9.4px;color:#000;letter-spacing:-0.073px;">List</div>
<svg style="left:1239.8px;top:120.2px" width="5" height="3" viewBox="0 0 5 3"><path d="M0.35 0H4.45L2.4 2.55Z" fill="#1d1d1d"/></svg>
<div class="sep" style="left:1252px;top:113.5px;height:13.8px"></div>
<svg style="left:1260px;top:113px" width="14" height="15" viewBox="0 0 14 15"><path d="M10.8 4.8A4.9 4.9 0 1 0 11.6 10" fill="none" stroke="#ccd8ec" stroke-width="3"/><path d="M7.2 6L13.8 6.6L13.4 0.2Z" fill="#ccd8ec"/></svg>
<svg style="left:1279.3px;top:120.2px" width="5" height="3" viewBox="0 0 5 3"><path d="M0.35 0H4.45L2.4 2.55Z" fill="#1d1d1d"/></svg>
<div style="position:absolute;left:717px;top:131px;width:571px;height:21px;background:#f5f8f9;"></div>
<div style="position:absolute;left:717px;top:152px;width:571px;height:1px;background:#d3d7da;"></div>
<svg style="left:722.5px;top:136px" width="14" height="12" viewBox="0 0 14 12"><rect x="3.5" y="0.3" width="7" height="8" rx="1" fill="#b65fc4"/><rect x="6.3" y="4" width="7" height="8" rx="1" fill="#5a93dc"/><rect x="0.2" y="2.5" width="7.3" height="7.6" rx="1" fill="#a5c272"/></svg>
<div class="t" style="left:741.5px;top:133.74px;font-size:9.4px;color:#000;letter-spacing:0.175px;">Global Environment</div>
<svg style="left:833.8px;top:141.5px" width="5" height="3" viewBox="0 0 5 3"><path d="M0.35 0H4.45L2.4 2.55Z" fill="#1d1d1d"/></svg>
<div class="a" style="left:1170px;top:135px;width:110px;height:16px;box-sizing:border-box;border:1px solid #cfd3d6;border-radius:3px;background:#fff"></div>
<svg style="left:1177px;top:138px" width="12" height="11" viewBox="0 0 12 11"><circle cx="4.3" cy="4.3" r="3.2" fill="none" stroke="#a9a9a9" stroke-width="1.6"/><path d="M6.8 6.8L10.8 10.4" stroke="#a9a9a9" stroke-width="2"/></svg>
<div style="position:absolute;left:717px;top:153px;width:554px;height:238px;background:#fff;"></div>
<div style="position:absolute;left:717px;top:153px;width:554px;height:18px;background:#f3f6f8;"></div>
<div class="a m" style="left:721.5px;top:155.00px;font-size:12.04px;line-height:15px;height:15px;white-space:pre;color:#000">Data</div>
<div style="position:absolute;left:717px;top:171px;width:554px;height:1px;background:#dcdfe2;"></div>
<div style="position:absolute;left:717px;top:189px;width:554px;height:1px;background:#dcdfe2;"></div>
<div style="position:absolute;left:717px;top:207px;width:554px;height:1px;background:#dcdfe2;"></div>
<div style="position:absolute;left:717px;top:375px;width:554px;height:1px;background:#dcdfe2;"></div>
<div style="position:absolute;left:717px;top:222px;width:554px;height:1px;background:#dcdfe2;"></div>
<div style="position:absolute;left:717px;top:237px;width:554px;height:1px;background:#dcdfe2;"></div>
<div style="position:absolute;left:717px;top:252px;width:554px;height:1px;background:#dcdfe2;"></div>
<div style="position:absolute;left:717px;top:267px;width:554px;height:1px;background:#dcdfe2;"></div>
<div style="position:absolute;left:717px;top:282px;width:554px;height:1px;background:#dcdfe2;"></div>
<div style="position:absolute;left:717px;top:297px;width:554px;height:1px;background:#dcdfe2;"></div>
<div style="position:absolute;left:717px;top:312px;width:554px;height:1px;background:#dcdfe2;"></div>
<div style="position:absolute;left:717px;top:327px;width:554px;height:1px;background:#dcdfe2;"></div>
<div style="position:absolute;left:717px;top:342px;width:554px;height:1px;background:#dcdfe2;"></div>
<div style="position:absolute;left:717px;top:357px;width:554px;height:1px;background:#dcdfe2;"></div>
<div style="position:absolute;left:876px;top:172px;width:1px;height:17px;background:#dcdfe2;"></div>
<div style="position:absolute;left:876px;top:190px;width:1px;height:17px;background:#dcdfe2;"></div>
<div style="position:absolute;left:876px;top:358px;width:1px;height:17px;background:#dcdfe2;"></div>
<div style="position:absolute;left:876px;top:376px;width:1px;height:15px;background:#dcdfe2;"></div>
<svg style="left:719.9px;top:172.8px" width="12" height="12" viewBox="0 0 12 12"><circle cx="6" cy="6" r="4.7" fill="#74ace0" stroke="#6aa3d8" stroke-width="0.8"/><path d="M4.6 3.2V8.8L8.6 6Z" fill="#fff"/></svg>
<div class="a m" style="left:735.7px;top:173.00px;font-size:12.04px;line-height:15px;height:15px;white-space:pre;color:#000">data.combined</div>
<div class="a m" style="left:882.4px;top:173.00px;font-size:12.04px;line-height:15px;height:15px;white-space:pre;color:#000">1309 obs. of 11 variables</div>
<svg style="left:1258px;top:174px" width="13" height="12" viewBox="0 0 13 12"><rect x="0.5" y="0.5" width="12.5" height="11" rx="1.5" fill="#fff" stroke="#cfd6de" stroke-width="0.9"/><rect x="1" y="1" width="11.5" height="2.4" fill="#cfe2f3"/><path d="M1 4H12.5M1 6.5H12.5M1 9H12.5M3.8 4V11M6.6 4V11M9.4 4V11" stroke="#dde2e8" stroke-width="0.6"/></svg>
<svg style="left:719.9px;top:190.8px" width="12" height="12" viewBox="0 0 12 12"><circle cx="6" cy="6" r="4.7" fill="#6c7fe0" stroke="#5d70d6" stroke-width="0.8"/><path d="M3.3 4.5H8.7L6 8.3Z" fill="#fff"/></svg>
<div class="a m" style="left:735.7px;top:191.00px;font-size:12.04px;line-height:15px;height:15px;white-space:pre;color:#000">test</div>
<div class="a m" style="left:882.4px;top:191.00px;font-size:12.04px;line-height:15px;height:15px;white-space:pre;color:#000">418 obs. of 10 variables</div>
<svg style="left:1258px;top:192px" width="13" height="12" viewBox="0 0 13 12"><rect x="0.5" y="0.5" width="12.5" height="11" rx="1.5" fill="#fff" stroke="#cfd6de" stroke-width="0.9"/><rect x="1" y="1" width="11.5" height="2.4" fill="#cfe2f3"/><path d="M1 4H12.5M1 6.5H12.5M1 9H12.5M3.8 4V11M6.6 4V11M9.4 4V11" stroke="#dde2e8" stroke-width="0.6"/></svg>
<svg style="left:719.9px;top:358.8px" width="12" height="12" viewBox="0 0 12 12"><circle cx="6" cy="6" r="4.7" fill="#74ace0" stroke="#6aa3d8" stroke-width="0.8"/><path d="M4.6 3.2V8.8L8.6 6Z" fill="#fff"/></svg>
<div class="a m" style="left:735.7px;top:359.00px;font-size:12.04px;line-height:15px;height:15px;white-space:pre;color:#000">test.survived</div>
<div class="a m" style="left:882.4px;top:359.00px;font-size:12.04px;line-height:15px;height:15px;white-space:pre;color:#000">418 obs. of 11 variables</div>
<svg style="left:1258px;top:360px" width="13" height="12" viewBox="0 0 13 12"><rect x="0.5" y="0.5" width="12.5" height="11" rx="1.5" fill="#fff" stroke="#cfd6de" stroke-width="0.9"/><rect x="1" y="1" width="11.5" height="2.4" fill="#cfe2f3"/><path d="M1 4H12.5M1 6.5H12.5M1 9H12.5M3.8 4V11M6.6 4V11M9.4 4V11" stroke="#dde2e8" stroke-width="0.6"/></svg>
<svg style="left:719.9px;top:376.8px" width="12" height="12" viewBox="0 0 12 12"><circle cx="6" cy="6" r="4.7" fill="#74ace0" stroke="#6aa3d8" stroke-width="0.8"/><path d="M4.6 3.2V8.8L8.6 6Z" fill="#fff"/></svg>
<div class="a m" style="left:735.7px;top:377.00px;font-size:12.04px;line-height:15px;height:15px;white-space:pre;color:#000">train</div>
<div class="a m" style="left:882.4px;top:377.00px;font-size:12.04px;line-height:15px;height:15px;white-space:pre;color:#000">891 obs. of 11 variables</div>
<svg style="left:1258px;top:378px" width="13" height="12" viewBox="0 0 13 12"><rect x="0.5" y="0.5" width="12.5" height="11" rx="1.5" fill="#fff" stroke="#cfd6de" stroke-width="0.9"/><rect x="1" y="1" width="11.5" height="2.4" fill="#cfe2f3"/><path d="M1 4H12.5M1 6.5H12.5M1 9H12.5M3.8 4V11M6.6 4V11M9.4 4V11" stroke="#dde2e8" stroke-width="0.6"/></svg>
<div class="a m" style="left:744px;top:208.00px;font-size:12.04px;line-height:15px;height:15px;white-space:pre;color:#000">pclass : int 3 3 2 3 3 3 3 2 3 3 ...</div>
<div class="a m" style="left:744px;top:223.00px;font-size:12.04px;line-height:15px;height:15px;white-space:pre;color:#000">name : Factor w/ 418 levels "Abbott, Master. Eugene Joseph",..: 210 409…</div>
<div class="a m" style="left:744px;top:238.00px;font-size:12.04px;line-height:15px;height:15px;white-space:pre;color:#000">sex : Factor w/ 2 levels "female","male": 2 1 2 2 1 2 1 2 1 2 ...</div>
<div class="a m" style="left:744px;top:253.00px;font-size:12.04px;line-height:15px;height:15px;white-space:pre;color:#000">age : num 34.5 47 62 27 22 14 30 26 18 21 ...</div>
<div class="a m" style="left:744px;top:268.00px;font-size:12.04px;line-height:15px;height:15px;white-space:pre;color:#000">sibsp : int 0 1 0 0 1 0 0 1 0 2 ...</div>
<div class="a m" style="left:744px;top:283.00px;font-size:12.04px;line-height:15px;height:15px;white-space:pre;color:#000">parch : int 0 0 0 0 1 0 0 1 0 0 ...</div>
<div class="a m" style="left:744px;top:298.00px;font-size:12.04px;line-height:15px;height:15px;white-space:pre;color:#000">ticket : Factor w/ 363 levels "110469","110489",..: 153 222 74 148 139 …</div>
<div class="a m" style="left:744px;top:313.00px;font-size:12.04px;line-height:15px;height:15px;white-space:pre;color:#000">fare : num 7.83 7 9.69 8.66 12.29 ...</div>
<div class="a m" style="left:744px;top:328.00px;font-size:12.04px;line-height:15px;height:15px;white-space:pre;color:#000">cabin : Factor w/ 77 levels "","A11","A18",..: 1 1 1 1 1 1 1 1 1 1 ...</div>
<div class="a m" style="left:744px;top:343.00px;font-size:12.04px;line-height:15px;height:15px;white-space:pre;color:#000">embarked: Factor w/ 3 levels "C","Q","S": 2 3 2 3 3 3 2 3 1 3 ...</div>
<div style="position:absolute;left:1271px;top:153px;width:17px;height:238px;background:#f5f5f5;"></div>
<svg style="left:1276px;top:160px" width="7" height="4" viewBox="0 0 7 4"><path d="M0 4L3.5 0L7 4Z" fill="#c2c2c2"/></svg>
<div style="position:absolute;left:1273px;top:170.2px;width:13px;height:201px;background:#d2d2d2;"></div>
<div style="position:absolute;left:1273px;top:171px;width:13px;height:1px;background:#c9cbcd;"></div>
<div style="position:absolute;left:1273px;top:189px;width:13px;height:1px;background:#c9cbcd;"></div>
<div style="position:absolute;left:1273px;top:207px;width:13px;height:1px;background:#c9cbcd;"></div>
<div style="position:absolute;left:1273px;top:222px;width:13px;height:1px;background:#c9cbcd;"></div>
<div style="position:absolute;left:1273px;top:237px;width:13px;height:1px;background:#c9cbcd;"></div>
<div style="position:absolute;left:1273px;top:252px;width:13px;height:1px;background:#c9cbcd;"></div>
<div style="position:absolute;left:1273px;top:267px;width:13px;height:1px;background:#c9cbcd;"></div>
<div style="position:absolute;left:1273px;top:282px;width:13px;height:1px;background:#c9cbcd;"></div>
<div style="position:absolute;left:1273px;top:297px;width:13px;height:1px;background:#c9cbcd;"></div>
<div style="position:absolute;left:1273px;top:312px;width:13px;height:1px;background:#c9cbcd;"></div>
<div style="position:absolute;left:1273px;top:327px;width:13px;height:1px;background:#c9cbcd;"></div>
<div style="position:absolute;left:1273px;top:342px;width:13px;height:1px;background:#c9cbcd;"></div>
<div style="position:absolute;left:1273px;top:357px;width:13px;height:1px;background:#c9cbcd;"></div>
<svg style="left:1275px;top:380px" width="8" height="4" viewBox="0 0 8 4"><path d="M0 0L4 4L8 0Z" fill="#505050"/></svg>
<div style="position:absolute;left:716px;top:111px;width:1px;height:42px;background:#f5f8f9;"></div>
<div style="position:absolute;left:716px;top:153px;width:1px;height:18px;background:#f3f6f8;"></div>
<div style="position:absolute;left:716px;top:172px;width:1px;height:35px;background:#fff;"></div>
<div style="position:absolute;left:716px;top:358px;width:1px;height:33px;background:#fff;"></div>
<div style="position:absolute;left:716px;top:110px;width:1px;height:1px;background:#d9dde0;"></div>
<div style="position:absolute;left:716px;top:130px;width:1px;height:1px;background:#d9dde0;"></div>
<div style="position:absolute;left:716px;top:152px;width:1px;height:1px;background:#d9dde0;"></div>
<div style="position:absolute;left:716px;top:171px;width:1px;height:1px;background:#d9dde0;"></div>
<div style="position:absolute;left:716px;top:189px;width:1px;height:1px;background:#d9dde0;"></div>
<div style="position:absolute;left:716px;top:375px;width:1px;height:1px;background:#d9dde0;"></div>
<div style="position:absolute;left:716px;top:207px;width:1px;height:151px;background:#cfd4d8;"></div>
<div class="pane" style="left:716px;top:398px;width:573px;height:520px"></div>
<div style="position:absolute;left:717px;top:399px;width:571px;height:20px;background:#e4e7e9;border-radius:3px 3px 0 0;"></div>
<div style="position:absolute;left:717px;top:419px;width:571px;height:1px;background:#d3d7da;"></div>
<div style="position:absolute;left:717px;top:399px;width:36px;height:20px;background:#edeff0;border-radius:3px 3px 0 0;border-right:1px solid #cfd4d7;"></div>
<div class="t" style="left:723.8px;top:400.24px;font-size:9.4px;font-weight:bold;color:#1a1a1a;letter-spacing:-0.175px;">Files</div>
<div style="position:absolute;left:754px;top:399px;width:38px;height:21px;background:#f5f8f9;border-radius:3px 3px 0 0;border-right:1px solid #cfd4d7;"></div>
<div class="t" style="left:761px;top:400.24px;font-size:9.4px;font-weight:bold;color:#1a1a1a;letter-spacing:-0.004px;">Plots</div>
<div style="position:absolute;left:793px;top:399px;width:58px;height:20px;background:#edeff0;border-radius:3px 3px 0 0;border-right:1px solid #cfd4d7;"></div>
<div class="t" style="left:800.8px;top:400.24px;font-size:9.4px;font-weight:bold;color:#1a1a1a;letter-spacing:-0.058px;">Packages</div>
<div style="position:absolute;left:852px;top:399px;width:37px;height:20px;background:#edeff0;border-radius:3px 3px 0 0;border-right:1px solid #cfd4d7;"></div>
<div class="t" style="left:860px;top:400.24px;font-size:9.4px;font-weight:bold;color:#1a1a1a;letter-spacing:0.318px;">Help</div>
<div style="position:absolute;left:890px;top:399px;width:47px;height:20px;background:#edeff0;border-radius:3px 3px 0 0;border-right:1px solid #cfd4d7;"></div>
<div class="t" style="left:898px;top:400.24px;font-size:9.4px;font-weight:bold;color:#1a1a1a;letter-spacing:0.206px;">Viewer</div>
<svg style="left:1251px;top:405.6px" width="32" height="12" viewBox="0 0 32 12"><rect x="0.55" y="5.85" width="11.9" height="4.4" rx="0.8" fill="#f7f8f9" stroke="#87939b" stroke-width="1.1"/><rect x="0" y="5.3" width="13" height="2.6" rx="1" fill="#87939b"/><rect x="16.55" y="0.55" width="11.9" height="9.7" rx="0.8" fill="none" stroke="#87939b" stroke-width="1.1"/><rect x="16" y="0" width="13" height="2.8" rx="1" fill="#87939b"/></svg>
<div style="position:absolute;left:717px;top:420px;width:571px;height:19px;background:#f5f8f9;"></div>
<div style="position:absolute;left:717px;top:439px;width:571px;height:1px;background:#d3d7da;"></div>
<svg style="left:722.5px;top:424.4px" width="14" height="11.4" viewBox="0 0 14 11.4"><path d="M0.3 5.7L6.2 0.4V3H13V8.4H6.2V11Z" fill="#d8e8f4"/></svg>
<svg style="left:745.5px;top:424.4px" width="14" height="11.4" viewBox="0 0 14 11.4"><path d="M13.7 5.7L7.8 0.4V3H1V8.4H7.8V11Z" fill="#d8e8f4"/></svg>
<div class="sep" style="left:765px;top:422px;height:13.5px"></div>
<svg style="left:774px;top:422px" width="14" height="15" viewBox="0 0 14 15"><circle cx="8" cy="5.5" r="4.3" fill="#d7ebd9" stroke="#8a96a3" stroke-width="1.3"/><path d="M8 3.3V7.7M5.8 5.5H10.2" stroke="#2aa35a" stroke-width="1.5"/><path d="M5 8.8L1 13.5" stroke="#b0722a" stroke-width="2.2" stroke-linecap="round"/></svg>
<div class="t" style="left:792.8px;top:422.24px;font-size:9.4px;color:#000;letter-spacing:0.383px;">Zoom</div>
<div class="sep" style="left:828px;top:422px;height:13.5px"></div>
<svg style="left:836px;top:424px" width="15" height="12" viewBox="0 0 15 12"><rect x="3.5" y="0.5" width="11" height="10.4" fill="#9fd0f2" stroke="#c9d2da" stroke-width="0.7"/><path d="M4 6L7.5 4.6L10.5 5.8L14 4.4V10.4H4Z" fill="#eec64b"/><path d="M4 7.6L8 6.8L14 7.4V10.4H4Z" fill="#e9ae3e"/><path d="M0 4.6H4V3L7 5.4L4 7.8V6.2H0Z" fill="#5b6470"/></svg>
<div class="t" style="left:854.8px;top:422.24px;font-size:9.4px;color:#000;letter-spacing:0.065px;">Export</div>
<svg style="left:888.6px;top:429.2px" width="5" height="3" viewBox="0 0 5 3"><path d="M0.35 0H4.45L2.4 2.55Z" fill="#1d1d1d"/></svg>
<div class="sep" style="left:901px;top:422px;height:13.5px"></div>
<svg style="left:908px;top:423px" width="15" height="13" viewBox="0 0 15 13"><rect x="6" y="3" width="8.5" height="9" fill="#fff"/><circle cx="5" cy="5" r="4.6" fill="#c22b2b"/><path d="M3.2 3.2L6.8 6.8M6.8 3.2L3.2 6.8" stroke="#fff" stroke-width="1.5"/></svg>
<div class="sep" style="left:930px;top:422px;height:13.5px"></div>
<svg style="left:938.4px;top:421.4px" width="14" height="15" viewBox="0 0 14 15"><path d="M12.6 1L8.2 7.4" stroke="#dc5b57" stroke-width="1.7" stroke-linecap="round"/><path d="M5.6 6.2L9.8 9.2L7.4 14.2C4.8 14.6 2.2 13.8 0.6 12.2C2.8 11 4.6 9 5.6 6.2Z" fill="#e5c87c" stroke="#cfa955" stroke-width="0.6"/><path d="M5.4 6.6L9.6 9.6M4.6 8.2L9 11.2" stroke="#b8873a" stroke-width="1"/></svg>
<svg style="left:1188px;top:423px" width="14" height="12" viewBox="0 0 14 12"><path d="M0.3 6.3H3A4.3 4.3 0 0 1 11 4.5" fill="none" stroke="#2b96e0" stroke-width="1.7"/><path d="M14 7.3H11.6A4.3 4.3 0 0 1 3.6 9.1" fill="none" stroke="#2b96e0" stroke-width="1.7"/><circle cx="7.3" cy="6.8" r="1.9" fill="#2b96e0"/></svg>
<div class="t" style="left:1207.5px;top:422.24px;font-size:9.4px;color:#000;letter-spacing:-0.036px;">Publish</div>
<svg style="left:1248.5px;top:429.2px" width="5" height="3" viewBox="0 0 5 3"><path d="M0.35 0H4.45L2.4 2.55Z" fill="#1d1d1d"/></svg>
<div class="sep" style="left:1261px;top:422px;height:13.5px"></div>
<svg style="left:1268px;top:421px" width="14" height="15" viewBox="0 0 14 15"><path d="M10.8 4.8A4.9 4.9 0 1 0 11.6 10" fill="none" stroke="#d3ddee" stroke-width="3"/><path d="M7.2 6L13.8 6.6L13.4 0.2Z" fill="#d3ddee"/></svg>
<div style="position:absolute;left:717px;top:440px;width:571px;height:477px;background:#fff;"></div>
<svg style="left:0;top:0" width="1305" height="933" viewBox="0 0 1305 933"><rect x="764.1" y="446.1" width="439.2" height="430.0" fill="#ebebeb"/><path d="M764.1 817.61H1203.3" stroke="#f6f6f6" stroke-width="0.75"/><path d="M764.1 738.03H1203.3" stroke="#f6f6f6" stroke-width="0.75"/><path d="M764.1 658.45H1203.3" stroke="#f6f6f6" stroke-width="0.75"/><path d="M764.1 578.87H1203.3" stroke="#f6f6f6" stroke-width="0.75"/><path d="M764.1 499.29H1203.3" stroke="#f6f6f6" stroke-width="0.75"/><path d="M764.1 857.40H1203.3" stroke="#fafafa" stroke-width="1.45"/><path d="M760.4 857.40H764.1" stroke="#333" stroke-width="1.4"/><text x="757.7" y="861.70" text-anchor="end" font-family="Liberation Sans" font-size="11.73" fill="#4d4d4d">0</text><path d="M764.1 777.82H1203.3" stroke="#fafafa" stroke-width="1.45"/><path d="M760.4 777.82H764.1" stroke="#333" stroke-width="1.4"/><text x="757.7" y="782.12" text-anchor="end" font-family="Liberation Sans" font-size="11.73" fill="#4d4d4d">100</text><path d="M764.1 698.24H1203.3" stroke="#fafafa" stroke-width="1.45"/><path d="M760.4 698.24H764.1" stroke="#333" stroke-width="1.4"/><text x="757.7" y="702.54" text-anchor="end" font-family="Liberation Sans" font-size="11.73" fill="#4d4d4d">200</text><path d="M764.1 618.66H1203.3" stroke="#fafafa" stroke-width="1.45"/><path d="M760.4 618.66H764.1" stroke="#333" stroke-width="1.4"/><text x="757.7" y="622.96" text-anchor="end" font-family="Liberation Sans" font-size="11.73" fill="#4d4d4d">300</text><path d="M764.1 539.08H1203.3" stroke="#fafafa" stroke-width="1.45"/><path d="M760.4 539.08H764.1" stroke="#333" stroke-width="1.4"/><text x="757.7" y="543.38" text-anchor="end" font-family="Liberation Sans" font-size="11.73" fill="#4d4d4d">400</text><path d="M764.1 459.50H1203.3" stroke="#fafafa" stroke-width="1.45"/><path d="M760.4 459.50H764.1" stroke="#333" stroke-width="1.4"/><text x="757.7" y="463.80" text-anchor="end" font-family="Liberation Sans" font-size="11.73" fill="#4d4d4d">500</text><path d="M847.0 446.1V876.1" stroke="#fafafa" stroke-width="1.45"/><path d="M847.0 876.1V879.8000000000001" stroke="#333" stroke-width="1.4"/><text x="846.4" y="892.8" text-anchor="middle" font-family="Liberation Sans" font-size="11.73" fill="#4d4d4d">1</text><path d="M983.9 446.1V876.1" stroke="#fafafa" stroke-width="1.45"/><path d="M983.9 876.1V879.8000000000001" stroke="#333" stroke-width="1.4"/><text x="983.3" y="892.8" text-anchor="middle" font-family="Liberation Sans" font-size="11.73" fill="#4d4d4d">2</text><path d="M1120.7 446.1V876.1" stroke="#fafafa" stroke-width="1.45"/><path d="M1120.7 876.1V879.8000000000001" stroke="#333" stroke-width="1.4"/><text x="1120.1000000000001" y="892.8" text-anchor="middle" font-family="Liberation Sans" font-size="11.73" fill="#4d4d4d">3</text><rect x="811.5" y="684.2" width="69.4" height="63.9" fill="#f8766d"/><rect x="811.5" y="748.1" width="69.4" height="108.8" fill="#00bfc4"/><rect x="949.4" y="710.3" width="68.4" height="76.6" fill="#f8766d"/><rect x="949.4" y="786.9" width="68.4" height="70.0" fill="#00bfc4"/><rect x="1086.1" y="465.0" width="69.5" height="296.5" fill="#f8766d"/><rect x="1086.1" y="761.5" width="69.5" height="95.4" fill="#00bfc4"/><text x="983.2" y="907.8" text-anchor="middle" font-family="Liberation Sans" font-size="13.5" fill="#000">Pclass</text><text transform="translate(734,661.2) rotate(-90)" text-anchor="middle" font-family="Liberation Sans" font-size="13.5" fill="#000">Total Count</text><text x="1222.8" y="643.7" font-family="Liberation Sans" font-size="13.5" fill="#000">Survived</text><rect x="1223.8" y="651" width="19.2" height="20.3" fill="#f8766d"/><rect x="1223.8" y="671.7" width="19.2" height="20.2" fill="#00bfc4"/><text x="1249.2" y="666.2" font-family="Liberation Sans" font-size="11.73" fill="#000">0</text><text x="1249.2" y="686.8" font-family="Liberation Sans" font-size="11.73" fill="#000">1</text></svg>
<div style="position:absolute;left:716px;top:420px;width:1px;height:19px;background:#f5f8f9;"></div>
<div style="position:absolute;left:716px;top:439px;width:1px;height:1px;background:#d9dde0;"></div>
<div style="position:absolute;left:716px;top:440px;width:1px;height:477px;background:#fff;"></div>
</body></html>
